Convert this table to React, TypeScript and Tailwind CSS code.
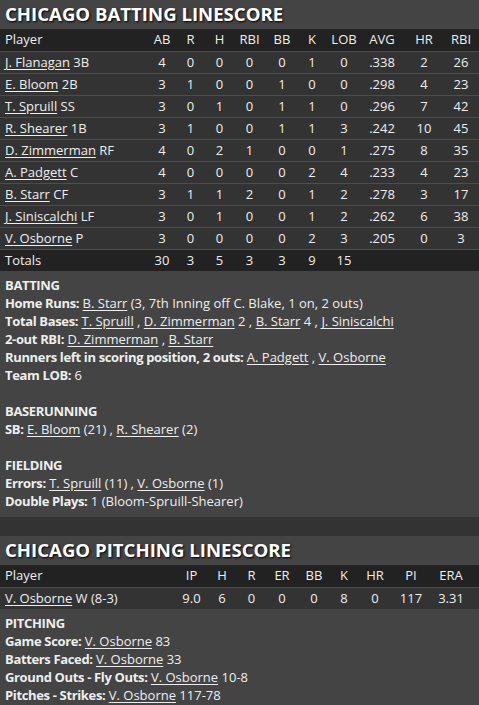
import React from "react";

const F = { fontFamily: '"Open Sans", "Noto Sans", sans-serif' };

const batCols = "grid-cols-[148px_28px_29px_29px_31px_34px_26px_38px_38px_46px_28px_1fr]";
const pitCols = "grid-cols-[176px_31px_30px_29px_32px_32px_28px_34px_38px_42px_1fr]";

type Bat = [string, string, (string | number)[]];
const batters: Bat[] = [
  ["J. Flanagan", "3B", [4, 0, 0, 0, 0, 1, 0, ".338", 2, 26]],
  ["E. Bloom", "2B", [3, 1, 0, 0, 1, 0, 0, ".298", 4, 23]],
  ["T. Spruill", "SS", [3, 0, 1, 0, 1, 1, 0, ".296", 7, 42]],
  ["R. Shearer", "1B", [3, 1, 0, 0, 1, 1, 3, ".242", 10, 45]],
  ["D. Zimmerman", "RF", [4, 0, 2, 1, 0, 0, 1, ".275", 8, 35]],
  ["A. Padgett", "C", [4, 0, 0, 0, 0, 2, 4, ".233", 4, 23]],
  ["B. Starr", "CF", [3, 1, 1, 2, 0, 1, 2, ".278", 3, 17]],
  ["J. Siniscalchi", "LF", [3, 0, 1, 0, 0, 1, 2, ".262", 6, 38]],
  ["V. Osborne", "P", [3, 0, 0, 0, 0, 2, 3, ".205", 0, 3]],
];

const L = ({ children }: { children: React.ReactNode }) => (
  <span className="underline underline-offset-2">{children}</span>
);
const B = ({ children }: { children: React.ReactNode }) => (
  <span className="font-bold tracking-[-0.35px]">{children}</span>
);

function Title({ text }: { text: string }) {
  return (
    <div className="h-[29px] bg-[#444444] px-[5px] flex items-center">
      <span className="text-[18.6px] font-bold text-white leading-none [text-shadow:1px_1px_2px_#000]">
        {text}
      </span>
    </div>
  );
}

export default function App() {
  const batHead = ["AB", "R", "H", "RBI", "BB", "K", "LOB", "AVG", "HR", "RBI"];
  const pitHead = ["IP", "H", "R", "ER", "BB", "K", "HR", "PI", "ERA"];
  const pitVals = ["9.0", "6", "0", "0", "0", "8", "0", "117", "3.31"];
  return (
    <div style={F} className="w-[479px] h-[705px] bg-[#444444] text-[#eeeeee] text-[13px] overflow-hidden">
      <Title text="CHICAGO BATTING LINESCORE" />
      <div className={`grid ${batCols} h-[22px] items-center bg-[#222222]`}>
        <div className="pl-[5px]">Player</div>
        {batHead.map((h, i) => (
          <div key={i} className="text-center">{h}</div>
        ))}
        <div />
      </div>
      {batters.map(([n, p, v], r) => (
        <div key={r} className={`grid ${batCols} h-[22px] items-center bg-[#333333] border-t border-[#4d4d4d]`}>
          <div className="pl-[5px] whitespace-nowrap">
            <L>{n}</L> {p}
          </div>
          {v.map((x, i) => (
            <div key={i} className="text-center">{x}</div>
          ))}
          <div />
        </div>
      ))}
      <div className={`grid ${batCols} h-[22px] items-center bg-[#222222] border-t border-[#4d4d4d]`}>
        <div className="pl-[5px]">Totals</div>
        {[30, 3, 5, 3, 3, 9, 15].map((x, i) => (
          <div key={i} className="text-center">{x}</div>
        ))}
      </div>
      <div className="pt-[5px] pb-[7px] px-[5px] leading-[18px]">
        <div><B>BATTING</B></div>
        <div><B>Home Runs:</B> <L>B. Starr</L> (3, 7th Inning off C. Blake, 1 on, 2 outs)</div>
        <div><B>Total Bases:</B> <L>T. Spruill</L> , <L>D. Zimmerman</L> 2 , <L>B. Starr</L> 4 , <L>J. Siniscalchi</L></div>
        <div><B>2-out RBI:</B> <L>D. Zimmerman</L> , <L>B. Starr</L></div>
        <div><B>Runners left in scoring position, 2 outs:</B> <L>A. Padgett</L> , <L>V. Osborne</L></div>
        <div><B>Team LOB:</B> 6</div>
        <div className="h-[18px]" />
        <div><B>BASERUNNING</B></div>
        <div><B>SB:</B> <L>E. Bloom</L> (21) , <L>R. Shearer</L> (2)</div>
        <div className="h-[18px]" />
        <div><B>FIELDING</B></div>
        <div><B>Errors:</B> <L>T. Spruill</L> (11) , <L>V. Osborne</L> (1)</div>
        <div><B>Double Plays:</B> 1 (Bloom-Spruill-Shearer)</div>
      </div>
      <div className="h-[19px] bg-[#333333]" />
      <Title text="CHICAGO PITCHING LINESCORE" />
      <div className={`grid ${pitCols} h-[22px] items-center bg-[#222222]`}>
        <div className="pl-[5px]">Player</div>
        {pitHead.map((h, i) => (
          <div key={i} className="text-center">{h}</div>
        ))}
        <div />
      </div>
      <div className={`grid ${pitCols} h-[22px] items-center bg-[#333333] border-t border-[#4d4d4d]`}>
        <div className="pl-[5px] whitespace-nowrap">
          <L>V. Osborne</L> W (8-3)
        </div>
        {pitVals.map((x, i) => (
          <div key={i} className="text-center">{x}</div>
        ))}
        <div />
      </div>
      <div className="pt-[5px] px-[5px] leading-[18px]">
        <div><B>PITCHING</B></div>
        <div><B>Game Score:</B> <L>V. Osborne</L> 83</div>
        <div><B>Batters Faced:</B> <L>V. Osborne</L> 33</div>
        <div><B>Ground Outs - Fly Outs:</B> <L>V. Osborne</L> 10-8</div>
        <div><B>Pitches - Strikes:</B> <L>V. Osborne</L> 117-78</div>
      </div>
    </div>
  );
}
